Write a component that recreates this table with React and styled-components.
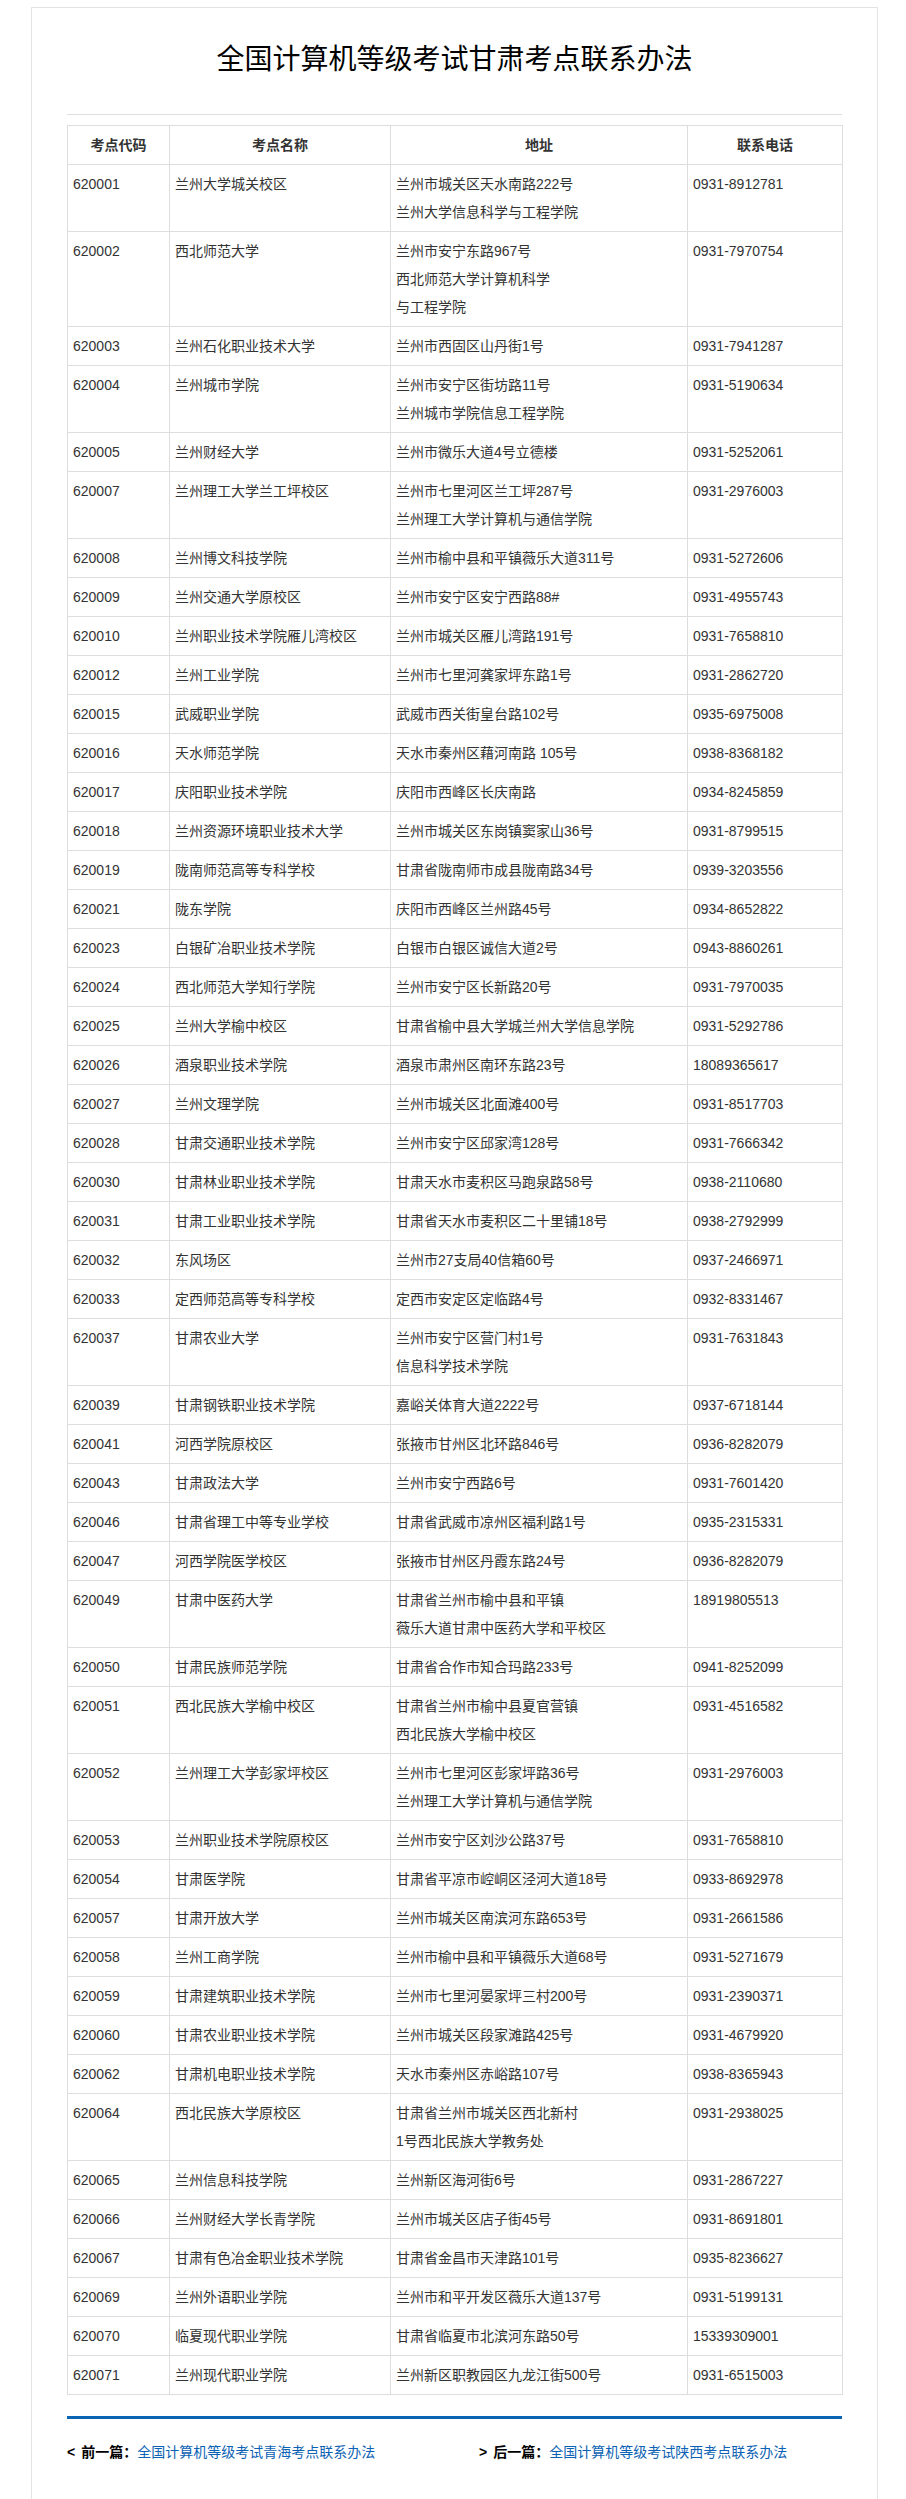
import styled, { createGlobalStyle } from "styled-components";

const GlobalStyle = createGlobalStyle`
  body {
    margin: 0;
    background: #fff;
    font-family: "Liberation Sans", Arial, "Noto Sans CJK SC", sans-serif;
    color: #333;
  }
`;

const Page = styled.div`
  padding-top: 7px;
`;

const Article = styled.div`
  box-sizing: border-box;
  width: 847px;
  margin-left: 31px;
  border: 1px solid #e3e3e3;
  padding: 32px 35px 80px;
`;

const Title = styled.h1`
  margin: 0;
  font-size: 28px;
  line-height: 40px;
  font-weight: normal;
  color: #000;
  text-align: center;
`;

const Rule = styled.div`
  border-top: 1px solid #ddd;
  margin: 34px 0 10px;
`;

const Table = styled.table`
  width: 775px;
  border-collapse: collapse;
  table-layout: fixed;
  font-size: 14px;
`;

const HeadCell = styled.th`
  border: 1px solid #ddd;
  padding: 5px;
  line-height: 28px;
  font-weight: bold;
  color: #333;
  text-align: center;
`;

const Cell = styled.td`
  border: 1px solid #ddd;
  padding: 5px;
  line-height: 28px;
  vertical-align: top;
  color: #333;
  text-align: left;
`;

const BlueBar = styled.div`
  height: 3px;
  background: #0a64b4;
  margin: 21px 0 19px;
`;

const Nav = styled.div`
  display: grid;
  grid-template-columns: 412px 1fr;
  font-size: 14px;
  line-height: 28px;
`;

const NavItem = styled.div`
  color: #000;
`;

const Arrow = styled.span`
  font-weight: bold;
  margin-right: 6px;
`;

const NavLabel = styled.span`
  font-weight: bold;
`;

const NavLink = styled.a`
  color: #0b62b4;
  text-decoration: none;
`;

const rows = [
  ["620001", "兰州大学城关校区", ["兰州市城关区天水南路222号", "兰州大学信息科学与工程学院"], "0931-8912781"],
  ["620002", "西北师范大学", ["兰州市安宁东路967号", "西北师范大学计算机科学", "与工程学院"], "0931-7970754"],
  ["620003", "兰州石化职业技术大学", ["兰州市西固区山丹街1号"], "0931-7941287"],
  ["620004", "兰州城市学院", ["兰州市安宁区街坊路11号", "兰州城市学院信息工程学院"], "0931-5190634"],
  ["620005", "兰州财经大学", ["兰州市微乐大道4号立德楼"], "0931-5252061"],
  ["620007", "兰州理工大学兰工坪校区", ["兰州市七里河区兰工坪287号", "兰州理工大学计算机与通信学院"], "0931-2976003"],
  ["620008", "兰州博文科技学院", ["兰州市榆中县和平镇薇乐大道311号"], "0931-5272606"],
  ["620009", "兰州交通大学原校区", ["兰州市安宁区安宁西路88#"], "0931-4955743"],
  ["620010", "兰州职业技术学院雁儿湾校区", ["兰州市城关区雁儿湾路191号"], "0931-7658810"],
  ["620012", "兰州工业学院", ["兰州市七里河龚家坪东路1号"], "0931-2862720"],
  ["620015", "武威职业学院", ["武威市西关街皇台路102号"], "0935-6975008"],
  ["620016", "天水师范学院", ["天水市秦州区藉河南路 105号"], "0938-8368182"],
  ["620017", "庆阳职业技术学院", ["庆阳市西峰区长庆南路"], "0934-8245859"],
  ["620018", "兰州资源环境职业技术大学", ["兰州市城关区东岗镇窦家山36号"], "0931-8799515"],
  ["620019", "陇南师范高等专科学校", ["甘肃省陇南师市成县陇南路34号"], "0939-3203556"],
  ["620021", "陇东学院", ["庆阳市西峰区兰州路45号"], "0934-8652822"],
  ["620023", "白银矿冶职业技术学院", ["白银市白银区诚信大道2号"], "0943-8860261"],
  ["620024", "西北师范大学知行学院", ["兰州市安宁区长新路20号"], "0931-7970035"],
  ["620025", "兰州大学榆中校区", ["甘肃省榆中县大学城兰州大学信息学院"], "0931-5292786"],
  ["620026", "酒泉职业技术学院", ["酒泉市肃州区南环东路23号"], "18089365617"],
  ["620027", "兰州文理学院", ["兰州市城关区北面滩400号"], "0931-8517703"],
  ["620028", "甘肃交通职业技术学院", ["兰州市安宁区邱家湾128号"], "0931-7666342"],
  ["620030", "甘肃林业职业技术学院", ["甘肃天水市麦积区马跑泉路58号"], "0938-2110680"],
  ["620031", "甘肃工业职业技术学院", ["甘肃省天水市麦积区二十里铺18号"], "0938-2792999"],
  ["620032", "东风场区", ["兰州市27支局40信箱60号"], "0937-2466971"],
  ["620033", "定西师范高等专科学校", ["定西市安定区定临路4号"], "0932-8331467"],
  ["620037", "甘肃农业大学", ["兰州市安宁区营门村1号", "信息科学技术学院"], "0931-7631843"],
  ["620039", "甘肃钢铁职业技术学院", ["嘉峪关体育大道2222号"], "0937-6718144"],
  ["620041", "河西学院原校区", ["张掖市甘州区北环路846号"], "0936-8282079"],
  ["620043", "甘肃政法大学", ["兰州市安宁西路6号"], "0931-7601420"],
  ["620046", "甘肃省理工中等专业学校", ["甘肃省武威市凉州区福利路1号"], "0935-2315331"],
  ["620047", "河西学院医学校区", ["张掖市甘州区丹霞东路24号"], "0936-8282079"],
  ["620049", "甘肃中医药大学", ["甘肃省兰州市榆中县和平镇", "薇乐大道甘肃中医药大学和平校区"], "18919805513"],
  ["620050", "甘肃民族师范学院", ["甘肃省合作市知合玛路233号"], "0941-8252099"],
  ["620051", "西北民族大学榆中校区", ["甘肃省兰州市榆中县夏官营镇", "西北民族大学榆中校区"], "0931-4516582"],
  ["620052", "兰州理工大学彭家坪校区", ["兰州市七里河区彭家坪路36号", "兰州理工大学计算机与通信学院"], "0931-2976003"],
  ["620053", "兰州职业技术学院原校区", ["兰州市安宁区刘沙公路37号"], "0931-7658810"],
  ["620054", "甘肃医学院", ["甘肃省平凉市崆峒区泾河大道18号"], "0933-8692978"],
  ["620057", "甘肃开放大学", ["兰州市城关区南滨河东路653号"], "0931-2661586"],
  ["620058", "兰州工商学院", ["兰州市榆中县和平镇薇乐大道68号"], "0931-5271679"],
  ["620059", "甘肃建筑职业技术学院", ["兰州市七里河晏家坪三村200号"], "0931-2390371"],
  ["620060", "甘肃农业职业技术学院", ["兰州市城关区段家滩路425号"], "0931-4679920"],
  ["620062", "甘肃机电职业技术学院", ["天水市秦州区赤峪路107号"], "0938-8365943"],
  ["620064", "西北民族大学原校区", ["甘肃省兰州市城关区西北新村", "1号西北民族大学教务处"], "0931-2938025"],
  ["620065", "兰州信息科技学院", ["兰州新区海河街6号"], "0931-2867227"],
  ["620066", "兰州财经大学长青学院", ["兰州市城关区店子街45号"], "0931-8691801"],
  ["620067", "甘肃有色冶金职业技术学院", ["甘肃省金昌市天津路101号"], "0935-8236627"],
  ["620069", "兰州外语职业学院", ["兰州市和平开发区薇乐大道137号"], "0931-5199131"],
  ["620070", "临夏现代职业学院", ["甘肃省临夏市北滨河东路50号"], "15339309001"],
  ["620071", "兰州现代职业学院", ["兰州新区职教园区九龙江街500号"], "0931-6515003"],
];

function App() {
  return (
    <Page>
      <GlobalStyle />
      <Article>
        <Title>全国计算机等级考试甘肃考点联系办法</Title>
        <Rule />
        <Table>
          <colgroup>
            <col style={{ width: 102 }} />
            <col style={{ width: 221 }} />
            <col style={{ width: 297 }} />
            <col style={{ width: 155 }} />
          </colgroup>
          <thead>
            <tr>
              <HeadCell>考点代码</HeadCell>
              <HeadCell>考点名称</HeadCell>
              <HeadCell>地址</HeadCell>
              <HeadCell>联系电话</HeadCell>
            </tr>
          </thead>
          <tbody>
            {rows.map(([code, name, address, phone]) => (
              <tr key={code}>
                <Cell>{code}</Cell>
                <Cell>{name}</Cell>
                <Cell>
                  {address.map((line) => (
                    <div key={line}>{line}</div>
                  ))}
                </Cell>
                <Cell>{phone}</Cell>
              </tr>
            ))}
          </tbody>
        </Table>
        <BlueBar />
        <Nav>
          <NavItem>
            <Arrow>&lt;</Arrow>
            <NavLabel>前一篇：</NavLabel>
            <NavLink href="#">全国计算机等级考试青海考点联系办法</NavLink>
          </NavItem>
          <NavItem>
            <Arrow>&gt;</Arrow>
            <NavLabel>后一篇：</NavLabel>
            <NavLink href="#">全国计算机等级考试陕西考点联系办法</NavLink>
          </NavItem>
        </Nav>
      </Article>
    </Page>
  );
}

export default App;
